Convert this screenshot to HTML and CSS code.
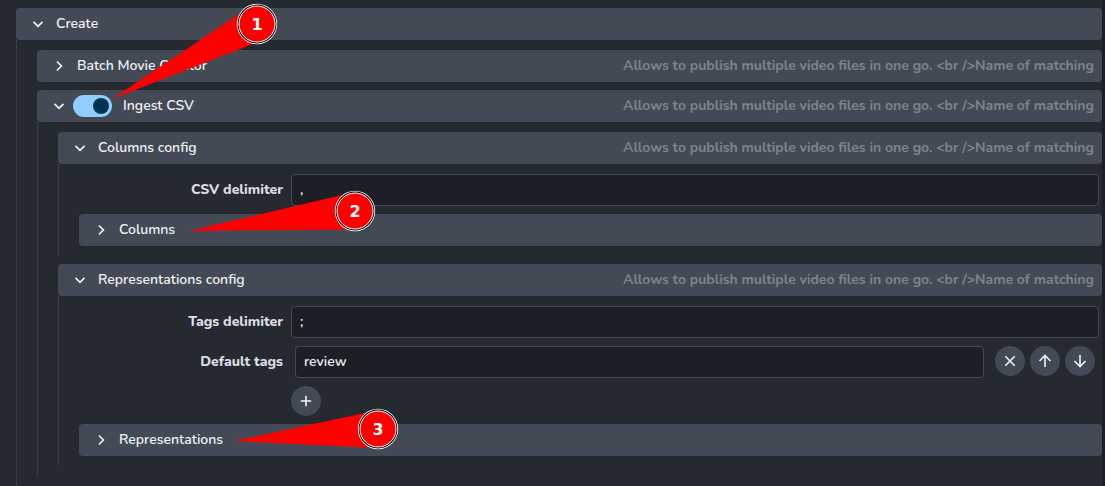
FILE: index.html
```html
<!DOCTYPE html>
<html lang="en">
<head>
<meta charset="utf-8">
<meta name="viewport" content="width=device-width, initial-scale=1">
<title>Create settings</title>
<link rel="stylesheet" href="styles.css">
</head>
<body>
<svg class="defs" width="0" height="0" aria-hidden="true">
  <symbol id="down" viewBox="0 0 14 14"><path d="M2.5 4.800 7 9.300l4.500-4.500"/></symbol>
  <symbol id="right" viewBox="0 0 14 14"><path d="M4.900 2.500 9.400 7l-4.500 4.500"/></symbol>
  <symbol id="cross" viewBox="0 0 16 16"><path d="M3.300 3.300l9.400 9.400M12.700 3.300l-9.400 9.400"/></symbol>
  <symbol id="arrow-up" viewBox="0 0 16 16"><path d="M8 14V2.800M2.500 8 8 2.500 13.500 8"/></symbol>
  <symbol id="arrow-down" viewBox="0 0 16 16"><path d="M8 2v11.200M2.500 8 8 13.500 13.500 8"/></symbol>
  <symbol id="plus" viewBox="0 0 16 16"><path d="M8 2.800v10.400M2.800 8h10.400"/></symbol>
</svg>
<main class="settings">
  <section class="group">
    <header class="bar">
      <button class="expander" type="button" aria-expanded="true"><svg class="chevron" aria-hidden="true"><use href="#down"/></svg><span>Create</span></button>
    </header>
    <div class="body">
      <section class="group">
        <header class="bar">
          <button class="expander" type="button" aria-expanded="false"><svg class="chevron" aria-hidden="true"><use href="#right"/></svg><span>Batch Movie Creator</span></button>
          <span class="hint">Allows to publish multiple video files in one go. &lt;br /&gt;Name of matching</span>
        </header>
      </section>
      <section class="group">
        <header class="bar">
          <button class="expander" type="button" aria-expanded="true" aria-label="Collapse Ingest CSV"><svg class="chevron" aria-hidden="true"><use href="#down"/></svg></button>
          <input class="switch" id="ingest" type="checkbox" checked>
          <label class="switch-label" for="ingest">Ingest CSV</label>
          <span class="hint">Allows to publish multiple video files in one go. &lt;br /&gt;Name of matching</span>
        </header>
        <div class="body">
          <section class="group">
            <header class="bar">
              <button class="expander" type="button" aria-expanded="true"><svg class="chevron" aria-hidden="true"><use href="#down"/></svg><span>Columns config</span></button>
              <span class="hint">Allows to publish multiple video files in one go. &lt;br /&gt;Name of matching</span>
            </header>
            <div class="body">
              <div class="field">
                <label for="csv-delimiter">CSV delimiter</label>
                <input class="text" id="csv-delimiter" type="text" value=",">
              </div>
              <header class="bar">
                <button class="expander" type="button" aria-expanded="false"><svg class="chevron" aria-hidden="true"><use href="#right"/></svg><span>Columns</span></button>
              </header>
            </div>
          </section>
          <section class="group">
            <header class="bar">
              <button class="expander" type="button" aria-expanded="true"><svg class="chevron" aria-hidden="true"><use href="#down"/></svg><span>Representations config</span></button>
              <span class="hint">Allows to publish multiple video files in one go. &lt;br /&gt;Name of matching</span>
            </header>
            <div class="body">
              <div class="field">
                <label for="tags-delimiter">Tags delimiter</label>
                <input class="text" id="tags-delimiter" type="text" value=";">
              </div>
              <div class="field">
                <label for="default-tag">Default tags</label>
                <div class="list">
                  <div class="item">
                    <input class="text" id="default-tag" type="text" value="review">
                    <div class="actions">
                      <button class="round" type="button" aria-label="Remove"><svg class="icon" aria-hidden="true"><use href="#cross"/></svg></button>
                      <button class="round" type="button" aria-label="Move up"><svg class="icon" aria-hidden="true"><use href="#arrow-up"/></svg></button>
                      <button class="round" type="button" aria-label="Move down"><svg class="icon" aria-hidden="true"><use href="#arrow-down"/></svg></button>
                    </div>
                  </div>
                  <button class="round" type="button" aria-label="Add"><svg class="icon" aria-hidden="true"><use href="#plus"/></svg></button>
                </div>
              </div>
              <header class="bar">
                <button class="expander" type="button" aria-expanded="false"><svg class="chevron" aria-hidden="true"><use href="#right"/></svg><span>Representations</span></button>
              </header>
            </div>
          </section>
        </div>
      </section>
    </div>
  </section>
</main>
<svg class="callouts" width="400" height="456" viewBox="0 0 400 456">
  <path class="wedge" d="M112 99 239 14 257 24 254 43.500z"/>
  <path class="wedge" d="M189 231 342 195 355 211 345 229.500z"/>
  <path class="wedge" d="M234 441 365 413 378 429 367 447.500z"/>
  <g><circle class="outer" cx="257" cy="24" r="20.200"/><circle class="gap" cx="257" cy="24" r="19.400"/><circle class="inner" cx="257" cy="24" r="18"/><text x="257" y="30">1</text></g>
  <g><circle class="outer" cx="355" cy="211" r="20.200"/><circle class="gap" cx="355" cy="211" r="19.400"/><circle class="inner" cx="355" cy="211" r="18"/><text x="355" y="217">2</text></g>
  <g><circle class="outer" cx="378" cy="429" r="20.200"/><circle class="gap" cx="378" cy="429" r="19.400"/><circle class="inner" cx="378" cy="429" r="18"/><text x="378" y="435">3</text></g>
</svg>
</body>
</html>
```
FILE: styles.css
```css
* { box-sizing: border-box; }

body {
  margin: 0;
  background: #1c1f26;
  color: #f0f1f2;
  font: 600 14px/20px Nunito, Lato, sans-serif;
}

button, input { font: inherit; color: inherit; }

.defs { position: absolute; }

.settings {
  min-height: 100vh;
  margin-right: 3px;
  padding: 8px 0 0 16px;
  background: #252930;
}

.group { display: flex; flex-direction: column; }

.body {
  display: flex;
  flex-direction: column;
  gap: 8px;
  padding: 10px 0 10px 20px;
  border-left: 1px dotted #4a4f5a;
}

.bar {
  display: flex;
  align-items: center;
  min-height: 32px;
  padding: 0 8px 0 15px;
  border-radius: 4px;
  background: #434a56;
}

.expander {
  display: flex;
  align-items: center;
  gap: 11px;
  padding: 0;
  border: 0;
  background: none;
  text-align: left;
  white-space: nowrap;
}

.chevron {
  width: 14px;
  height: 14px;
  fill: none;
  stroke: #f0f1f2;
  stroke-width: 1.7;
}

.hint {
  margin-left: auto;
  color: #7f838b;
  font-weight: 700;
  white-space: nowrap;
}

.switch {
  appearance: none;
  display: flex;
  align-items: center;
  justify-content: flex-end;
  width: 39px;
  height: 22px;
  margin: 0 11px 0 7px;
  padding: 3px;
  border-radius: 11px;
  background: #8fceff;
}

.switch::before {
  content: "";
  width: 16px;
  height: 16px;
  border-radius: 50%;
  background: #00344f;
}

.field {
  display: grid;
  grid-template-columns: 204px 1fr;
  column-gap: 8px;
  padding-right: 3px;
}

.field > label {
  padding: 6px 0;
  color: #dcdee0;
  font-weight: 800;
  text-align: right;
}

.text {
  width: 100%;
  min-width: 0;
  height: 32px;
  padding: 0 8px 2px;
  border: 1px solid #434853;
  border-radius: 4px;
  background: #1c1f26;
}

.list { display: grid; gap: 8px; }

.item {
  display: flex;
  align-items: flex-start;
  gap: 11px;
  padding: 0 4px;
}

.actions { display: flex; gap: 5px; }

.round {
  display: grid;
  place-items: center;
  width: 30px;
  height: 30px;
  padding: 0;
  border: 0;
  border-radius: 50%;
  background: #434a56;
}

.icon {
  width: 16px;
  height: 16px;
  fill: none;
  stroke: #f0f1f2;
  stroke-width: 1.6;
}

.callouts {
  position: absolute;
  top: 0;
  left: 0;
  pointer-events: none;
}

.wedge { fill: #f00; }
.outer { fill: #fff; }
.gap { fill: #000; }
.inner { fill: #f00; stroke: #fff; stroke-width: 1; }

.callouts text {
  fill: #fff;
  font: 700 16px "DejaVu Sans", sans-serif;
  text-anchor: middle;
}
```
